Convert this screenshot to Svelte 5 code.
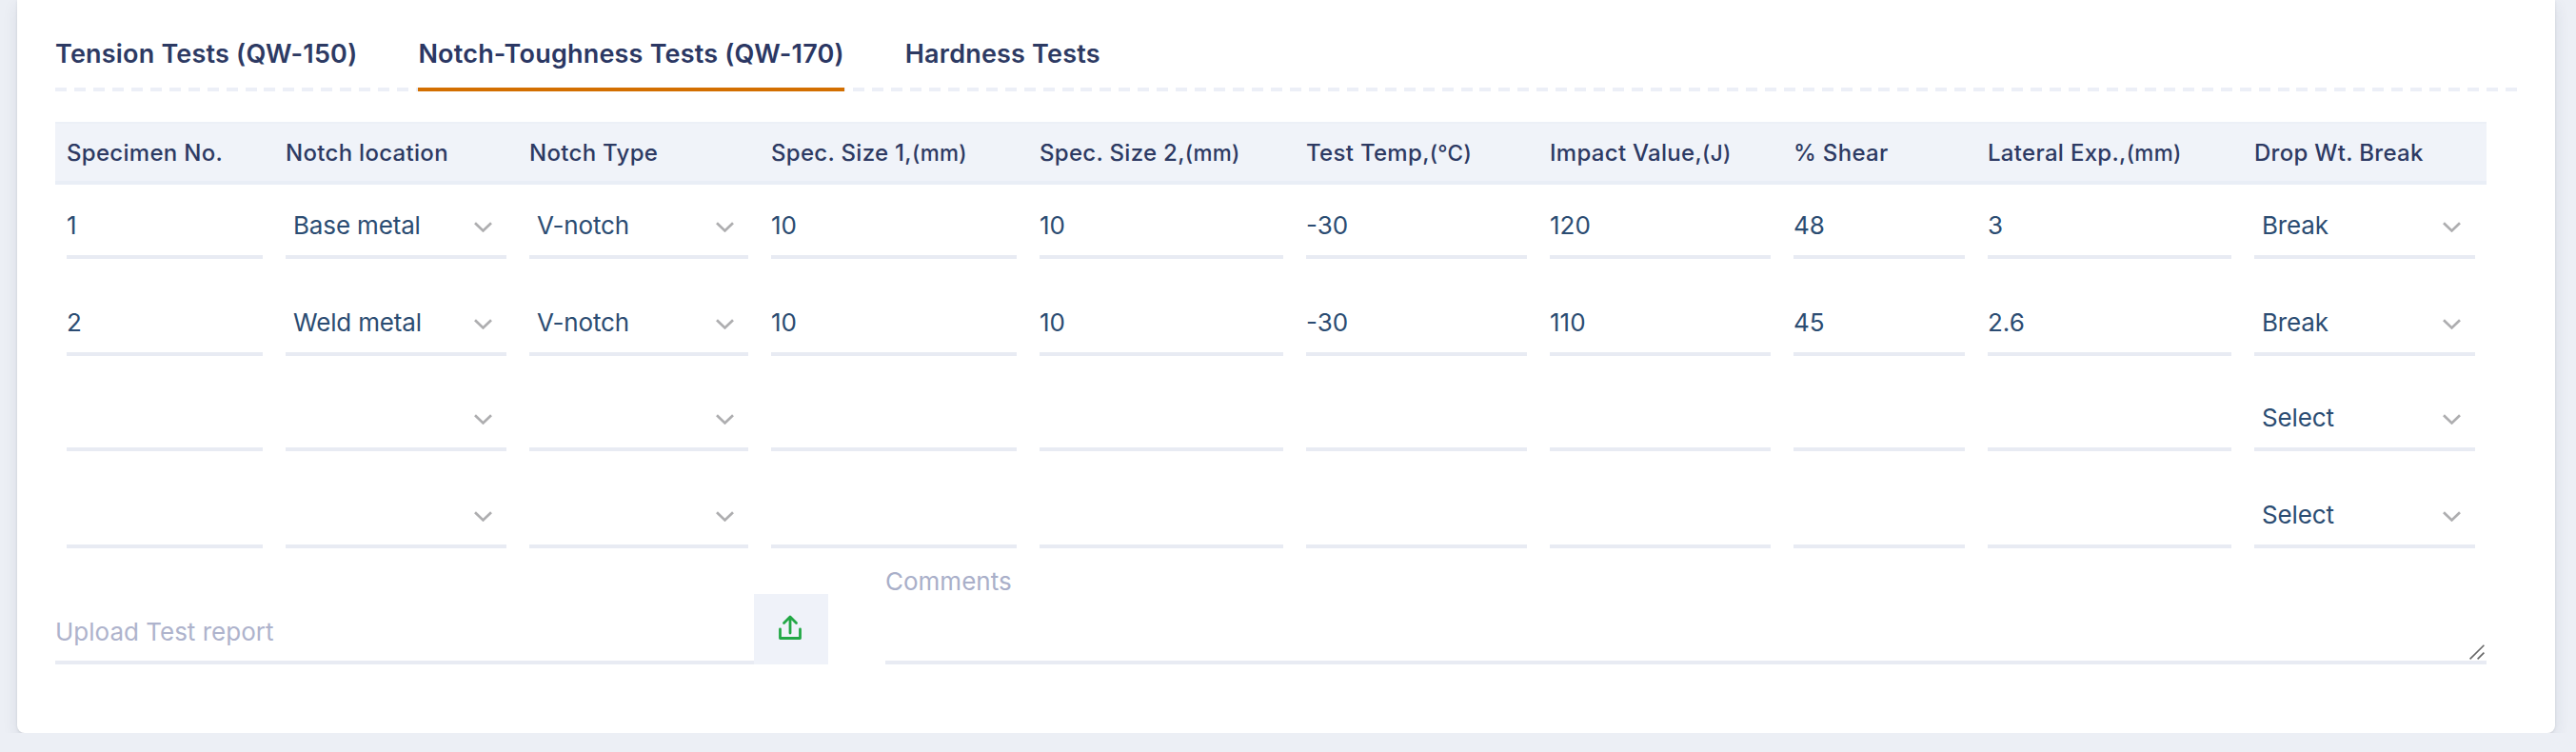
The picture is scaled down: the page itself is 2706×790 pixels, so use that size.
<script>
  const tabs = [
    { label: 'Tension Tests (QW-150)', active: false },
    { label: 'Notch-Toughness Tests (QW-170)', active: true },
    { label: 'Hardness Tests', active: false }
  ];
  const headers = [
    { t: 'Specimen No.' },
    { t: 'Notch location' },
    { t: 'Notch Type' },
    { t: 'Spec. Size 1,', u: '(mm)' },
    { t: 'Spec. Size 2,', u: '(mm)' },
    { t: 'Test Temp,', u: '(°C)' },
    { t: 'Impact Value,', u: '(J)' },
    { t: '% Shear' },
    { t: 'Lateral Exp.,', u: '(mm)' },
    { t: 'Drop Wt. Break' }
  ];
  const rows = [
    ['1', 'Base metal', 'V-notch', '10', '10', '-30', '120', '48', '3', 'Break'],
    ['2', 'Weld metal', 'V-notch', '10', '10', '-30', '110', '45', '2.6', 'Break'],
    ['', '', '', '', '', '', '', '', '', 'Select'],
    ['', '', '', '', '', '', '', '', '', 'Select']
  ];
  const selectCols = [1, 2, 9];
</script>

<div class="card">
  <div class="tabs">
    {#each tabs as tab}
      <div class="tab" class:active={tab.active}>{tab.label}</div>
    {/each}
  </div>

  <div class="grid head">
    {#each headers as h}
      <div class="th">{h.t}{#if h.u}<span class="unit">{h.u}</span>{/if}</div>
    {/each}
  </div>

  <div class="body">
    {#each rows as row}
      <div class="grid row">
        {#each row as value, c}
          <div class="td">
            {#if selectCols.includes(c)}
              <div class="select-wrap">
                <select class="field select" {value}>
                  <option {value}>{value}</option>
                </select>
                <svg class="chev" width="19" height="11" viewBox="0 0 19 11" aria-hidden="true">
                  <path d="M1 1.2 L9.5 9.4 L18 1.2" fill="none" stroke="#aeaeb0" stroke-width="2.7" />
                </svg>
              </div>
            {:else}
              <input class="field" {value} />
            {/if}
          </div>
        {/each}
      </div>
    {/each}
  </div>

  <div class="bottom">
    <div class="upload">
      <input class="upload-input" placeholder="Upload Test report" />
      <button class="upload-btn" aria-label="Upload">
        <svg width="24" height="26" viewBox="0 0 24 26" aria-hidden="true">
          <path d="M12 19 V2.5 M5.5 8.5 L12 2 L18.5 8.5 M1.5 15 V24.5 H22.5 V15" fill="none" stroke="#22a845" stroke-width="2.8" stroke-linecap="round" stroke-linejoin="round" />
        </svg>
      </button>
    </div>
    <div class="comments">
      <label class="comments-label" for="comments">Comments</label>
      <div class="comments-box">
        <textarea id="comments" class="comments-input"></textarea>
        <svg class="grip" width="16" height="16" viewBox="0 0 16 16" aria-hidden="true">
          <path d="M0.6 15.4 L15.4 0.8 M8.6 15.4 L15.4 8.6" fill="none" stroke="#666" stroke-width="1.6" />
        </svg>
      </div>
    </div>
  </div>
</div>

<style>
  :global(body) {
    margin: 0;
    background: #eceff5;
    font-family: Inter, "Noto Sans", sans-serif;
  }
  .card {
    box-sizing: border-box;
    width: 2666px;
    height: 770px;
    margin-left: 18px;
    padding: 0 72px 0 40px;
    background: #fff;
    border-radius: 0 0 8px 8px;
    box-shadow: 0 1px 3px rgba(0, 0, 0, 0.09), 0 6px 16px rgba(40, 50, 80, 0.1);
  }
  .tabs {
    display: flex;
    gap: 64px;
    height: 96px;
    box-sizing: border-box;
    padding-top: 37px;
    width: 2586px;
    background: repeating-linear-gradient(90deg, #eceff7 0 12px, transparent 12px 19.953px) left bottom / 100% 4px no-repeat;
  }
  .tab {
    font-size: 27px;
    font-weight: 600;
    letter-spacing: 0.2px;
    line-height: 40px;
    color: #2d3a63;
    height: 59px;
    box-sizing: border-box;
  }
  .tab.active {
    color: #2b3763;
    border-bottom: 4px solid #d36f00;
  }
  .grid {
    display: grid;
    grid-template-columns: 230px 256px 254px 282px 280px 256px 256px 204px 280px 256px;
  }
  .head {
    margin-top: 32px;
    height: 66px;
    width: 2554px;
    box-sizing: border-box;
    background: #f0f3f9;
    border-top: 2px solid #ecf0f7;
    border-bottom: 4px solid #e9eef6;
    align-items: center;
  }
  .th {
    padding-left: 12px;
    font-size: 24px;
    font-weight: 500;
    letter-spacing: 0.3px;
    color: #2d3a63;
    white-space: nowrap;
  }
  .unit {
    font-size: 22.5px;
  }
  .body {
    display: flex;
    flex-direction: column;
    gap: 22px;
  }
  .row {
    width: 2554px;
    height: 78px;
    align-items: end;
  }
  .row:nth-child(even) {
    height: 80px;
  }
  .td {
    padding: 0 12px;
    min-width: 0;
  }
  .field {
    display: block;
    box-sizing: border-box;
    width: 100%;
    height: 68px;
    padding: 0;
    border: 0;
    border-bottom: 4px solid #e8ebf3;
    border-radius: 0;
    outline: none;
    background: transparent;
    font: 400 26px Inter, "Noto Sans", sans-serif;
    color: #2b4c72;
  }
  .select-wrap {
    position: relative;
  }
  .select {
    appearance: none;
    -webkit-appearance: none;
    padding-left: 8px;
    letter-spacing: -0.15px;
    opacity: 1;
  }
  .chev {
    position: absolute;
    right: 15px;
    top: 29px;
    pointer-events: none;
  }
  .bottom {
    display: flex;
    align-items: flex-end;
    gap: 60px;
    width: 2554px;
    margin-top: 20px;
  }
  .upload {
    display: flex;
    align-items: flex-end;
    width: 812px;
    flex: none;
  }
  .upload-input {
    flex: 1;
    min-width: 0;
    box-sizing: border-box;
    height: 66px;
    padding: 0;
    border: 0;
    border-bottom: 4px solid #e8ebf3;
    outline: none;
    background: transparent;
    font: 400 26px Inter, "Noto Sans", sans-serif;
    color: #2b4c72;
  }
  .upload-input::placeholder {
    color: #aeb3cc;
    opacity: 1;
  }
  .upload-btn {
    flex: none;
    box-sizing: border-box;
    width: 78px;
    height: 74px;
    padding: 0 2px 4px 0;
    border: 0;
    background: #eff2f9;
    display: flex;
    align-items: center;
    justify-content: center;
  }
  .comments {
    flex: 1;
    min-width: 0;
    display: flex;
    flex-direction: column;
  }
  .comments-label {
    font-size: 26px;
    line-height: 30px;
    color: #a9afc9;
  }
  .comments-box {
    position: relative;
  }
  .comments-input {
    display: block;
    box-sizing: border-box;
    width: 100%;
    height: 72px;
    padding: 0;
    border: 0;
    border-bottom: 4px solid #e8ebf3;
    outline: none;
    resize: none;
    background: transparent;
    font: 400 26px Inter, "Noto Sans", sans-serif;
  }
  .grip {
    position: absolute;
    right: 2px;
    bottom: 5px;
    pointer-events: none;
  }
</style>
